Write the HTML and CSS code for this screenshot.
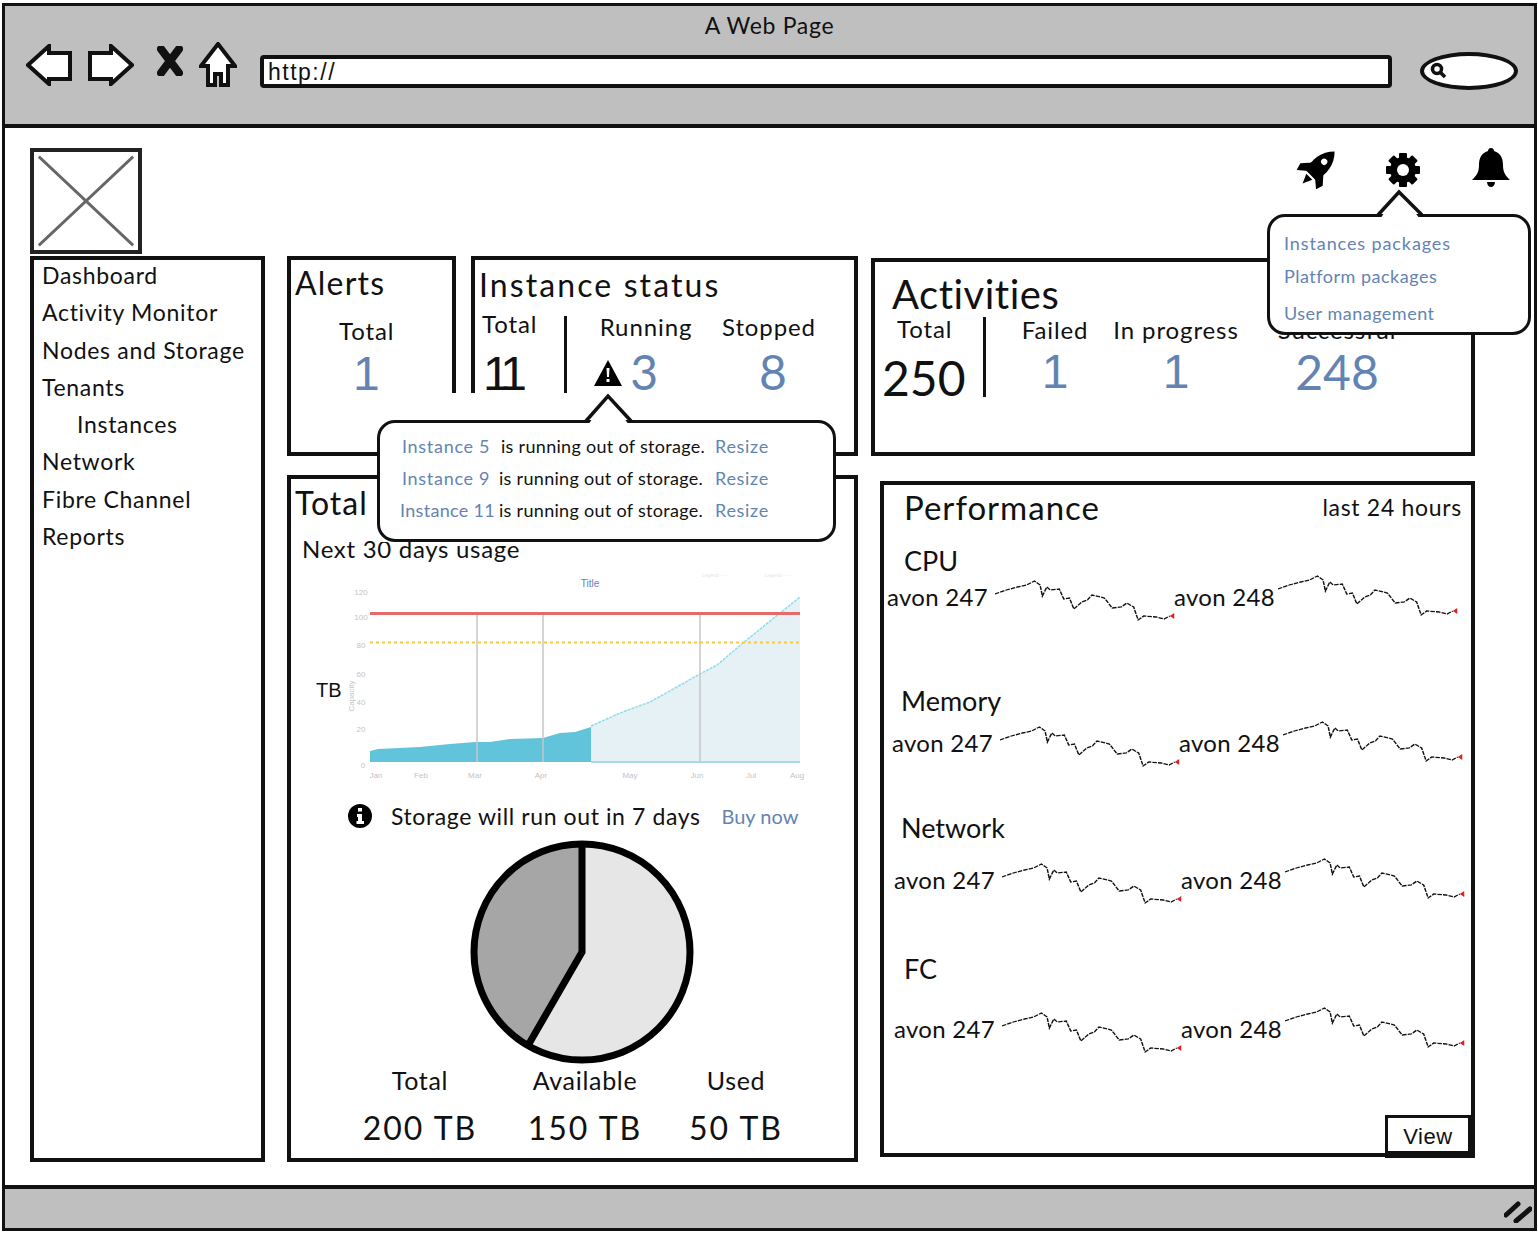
FILE: index.html
```html
<!DOCTYPE html>
<html lang="en">
<head>
    <meta charset="UTF-8">
    <title>A Web Page</title>
    <link rel="stylesheet" href="styles.css">
</head>
<body>
<svg class="defs" width="0" height="0">
    <symbol id="spark" viewBox="0 0 165 48" preserveAspectRatio="none">
        <path class="spark-line" d="M0 14 10 10 20 7 28 5 35 1 40 5 42 16 46 7 49 10 57 9 61 19 66 18 70 29 77 22 82 20 86 15 97 18 104 28 112 27 117 23 123 27 127 40 132 36 143 37 150 39 155 36"/>
        <path class="spark-end" d="M155 36 159 33V39Z"/>
    </symbol>
</svg>
<div class="window">
    <header class="titlebar">
        <div class="title">A Web Page</div>
        <div class="toolbar">
            <svg class="nav-icon nav-arrow" width="46" height="42" viewBox="0 0 46 42"><path d="M2 21 23 2V9H44V35H23V40Z"/></svg>
            <svg class="nav-icon nav-arrow" width="46" height="42" viewBox="0 0 46 42"><path d="M44 21 23 2V9H2V35H23V40Z"/></svg>
            <svg class="nav-stop" width="26" height="30" viewBox="0 0 26 30"><path d="M4 3 22 27M22 3 4 27"/></svg>
            <svg class="nav-icon" width="38" height="46" viewBox="0 0 38 46"><path d="M19 2 36 24H29V43H22V32H16V43H9V24H2Z"/></svg>
            <div class="url">http://</div>
            <div class="search">
                <svg width="18" height="18" viewBox="0 0 18 18"><circle cx="7" cy="7" r="4.5"/><path d="M10 10 15 15"/></svg>
            </div>
        </div>
    </header>

    <main class="content">
        <div class="topbar">
            <svg class="logo" width="112" height="106" viewBox="0 0 112 106"><path d="M5 5 107 101M107 5 5 101"/></svg>
            <div class="top-icons">
                <svg class="icon-rocket" width="40" height="38" viewBox="-19 -18 38 36">
                    <g transform="rotate(45)">
                        <path d="M0-25C9-16 10-5 7 7H-7C-10-5-9-16 0-25Z"/>
                        <path d="M-7-3-15 6-13 13-6 7ZM7-3 15 6 13 13 6 7ZM-4 9H4L0 18Z"/>
                        <circle class="hole" cx="0" cy="-11" r="3"/>
                    </g>
                </svg>
                <svg class="icon-gear" width="36" height="36" viewBox="-18 -18 36 36">
                    <rect x="-4" y="-17" width="8" height="34" rx="1"/>
                    <rect x="-4" y="-17" width="8" height="34" rx="1" transform="rotate(45)"/>
                    <rect x="-4" y="-17" width="8" height="34" rx="1" transform="rotate(90)"/>
                    <rect x="-4" y="-17" width="8" height="34" rx="1" transform="rotate(135)"/>
                    <circle r="13"/>
                    <circle class="hole" r="6"/>
                </svg>
                <svg class="icon-bell" width="38" height="40" viewBox="0 0 38 40">
                    <path d="M19 0C17 0 16 1.500 16 3 9 5 7 11 7 17 7 24 5 27 0 32H38C33 27 31 24 31 17 31 11 29 5 22 3 22 1.500 21 0 19 0Z"/>
                    <path d="M15 34H23C23 37 21 39 19 39 17 39 15 37 15 34Z"/>
                </svg>
            </div>
        </div>

        <div class="layout">
            <nav class="sidebar">
                <a href="#">Dashboard</a>
                <a href="#">Activity Monitor</a>
                <a href="#">Nodes and Storage</a>
                <a href="#">Tenants</a>
                <a href="#" class="sub">Instances</a>
                <a href="#">Network</a>
                <a href="#">Fibre Channel</a>
                <a href="#">Reports</a>
            </nav>

            <div class="panels">
                <section class="panel alerts">
                    <h2>Alerts</h2>
                    <div class="stat-label">Total</div>
                    <div class="stat-value stat-one blue">1</div>
                </section>

                <section class="panel status">
                    <h2>Instance status</h2>
                    <div class="stats">
                        <div class="stat stat-main">
                            <div class="stat-label">Total</div>
                            <div class="stat-value stat-one">11</div>
                        </div>
                        <div class="stat stat-running">
                            <div class="stat-label">Running</div>
                            <div class="stat-value blue">
                                <svg class="warn" width="28" height="26" viewBox="0 0 28 26"><path d="M14 0 28 26H0Z"/><path class="hole" d="M12.500 8H15.500L15 17H13ZM12.500 19H15.500V22H12.500Z"/></svg>
                                3
                            </div>
                        </div>
                        <div class="stat stat-stopped">
                            <div class="stat-label">Stopped</div>
                            <div class="stat-value blue">8</div>
                        </div>
                    </div>
                </section>

                <section class="panel activities">
                    <h2>Activities</h2>
                    <div class="stats">
                        <div class="stat stat-main">
                            <div class="stat-label">Total</div>
                            <div class="stat-value">250</div>
                        </div>
                        <div class="stat stat-failed">
                            <div class="stat-label">Failed</div>
                            <div class="stat-value stat-one blue">1</div>
                        </div>
                        <div class="stat stat-progress">
                            <div class="stat-label">In progress</div>
                            <div class="stat-value stat-one blue">1</div>
                        </div>
                        <div class="stat stat-success">
                            <div class="stat-label">Successful</div>
                            <div class="stat-value blue">248</div>
                        </div>
                    </div>
                </section>

                <section class="panel capacity">
                    <h2>Total</h2>
                    <p class="usage">Next 30 days usage</p>
                    <div class="chart-row">
                        <span class="chart-unit">TB</span>
                        <svg class="chart" width="465" height="220" viewBox="345 570 465 220">
                            <text class="chart-title" x="590" y="587">Title</text>
                            <text class="chart-legend" x="715" y="577">Legend - - -</text>
                            <text class="chart-legend" x="778" y="577">Legend - - -</text>
                            <g class="chart-ticks">
                                <text x="361" y="595">120</text>
                                <text x="361" y="620">100</text>
                                <text x="361" y="648">80</text>
                                <text x="361" y="677">60</text>
                                <text x="361" y="705">40</text>
                                <text x="361" y="732">20</text>
                                <text x="363" y="768">0</text>
                                <text x="376" y="778">Jan</text>
                                <text x="421" y="778">Feb</text>
                                <text x="475" y="778">Mar</text>
                                <text x="541" y="778">Apr</text>
                                <text x="630" y="778">May</text>
                                <text x="697" y="778">Jun</text>
                                <text x="751" y="778">Jul</text>
                                <text x="797" y="778">Aug</text>
                                <text transform="translate(354 696) rotate(-90)">Capacity</text>
                            </g>
                            <path class="area-future" d="M591 726 620 713 650 702 700 674 717 665 743 643 780 613 800 597V762H591Z"/>
                            <path class="area-past" d="M370 751 378 749 420 747 450 744 475 742 490 742 510 739 543 738 560 733 575 732 591 727V762H370Z"/>
                            <path class="trend" d="M591 726 620 713 650 702 700 674 717 665 743 643 780 613 800 597"/>
                            <path class="baseline" d="M591 762H800"/>
                            <path class="gridline" d="M477 614V762M543 614V762M700 614V762"/>
                            <path class="limit" d="M370 613.500H800"/>
                            <path class="warn-line" d="M370 642.500H800"/>
                        </svg>
                    </div>
                    <div class="notice">
                        <svg width="24" height="24" viewBox="0 0 24 24"><circle cx="12" cy="12" r="12"/><path class="hole" d="M10 4H14V7.500H10ZM9 10H14V17H16V20H8.500V17H10V13H9Z"/></svg>
                        <span>Storage will run out in 7 days</span>
                        <a href="#" class="link">Buy now</a>
                    </div>
                    <svg class="pie" width="226" height="226" viewBox="0 0 226 226">
                        <circle class="pie-used" cx="113" cy="113" r="108"/>
                        <path class="pie-free" d="M113 5A108 108 0 1 1 59 206.500L113 113Z"/>
                        <path class="pie-edge" d="M113 5V113L59 206.500"/>
                        <circle class="pie-edge" cx="113" cy="113" r="108"/>
                    </svg>
                    <div class="legend">
                        <div><span>Total</span><strong>200 TB</strong></div>
                        <div><span>Available</span><strong>150 TB</strong></div>
                        <div><span>Used</span><strong>50 TB</strong></div>
                    </div>
                </section>

                <section class="panel performance">
                    <div class="perf-head">
                        <h2>Performance</h2>
                        <span>last 24 hours</span>
                    </div>
                    <div class="metric metric-cpu">
                        <h3>CPU</h3>
                        <div class="sparks">
                            <span>avon 247</span><svg class="spark"><use href="#spark" width="186" height="48"/></svg>
                            <span>avon 248</span><svg class="spark"><use href="#spark" width="186" height="48"/></svg>
                        </div>
                    </div>
                    <div class="metric metric-memory">
                        <h3>Memory</h3>
                        <div class="sparks">
                            <span>avon 247</span><svg class="spark"><use href="#spark" width="186" height="48"/></svg>
                            <span>avon 248</span><svg class="spark"><use href="#spark" width="186" height="48"/></svg>
                        </div>
                    </div>
                    <div class="metric metric-network">
                        <h3>Network</h3>
                        <div class="sparks">
                            <span>avon 247</span><svg class="spark"><use href="#spark" width="186" height="48"/></svg>
                            <span>avon 248</span><svg class="spark"><use href="#spark" width="186" height="48"/></svg>
                        </div>
                    </div>
                    <div class="metric metric-fc">
                        <h3>FC</h3>
                        <div class="sparks">
                            <span>avon 247</span><svg class="spark"><use href="#spark" width="186" height="48"/></svg>
                            <span>avon 248</span><svg class="spark"><use href="#spark" width="186" height="48"/></svg>
                        </div>
                    </div>
                    <button class="view-btn">View</button>
                </section>
            </div>
        </div>

        <!-- callouts sit on top of the panels -->
        <div class="callout callout-alerts">
            <div class="bubble">
                <p><a href="#" class="link">Instance 5</a><span>is running out of storage.</span><a href="#" class="link">Resize</a></p>
                <p><a href="#" class="link">Instance 9</a><span>is running out of storage.</span><a href="#" class="link">Resize</a></p>
                <p><a href="#" class="link">Instance 11</a><span>is running out of storage.</span><a href="#" class="link">Resize</a></p>
            </div>
            <svg class="tail" width="50" height="34" viewBox="0 0 50 34"><path class="tail-fill" d="M4 32 24 3 45 32Z"/><path d="M2 28 24 3 47 28"/></svg>
        </div>

        <div class="callout callout-settings">
            <div class="bubble">
                <a href="#" class="link">Instances packages</a>
                <a href="#" class="link">Platform packages</a>
                <a href="#" class="link">User management</a>
            </div>
            <svg class="tail" width="50" height="32" viewBox="0 0 50 32"><path class="tail-fill" d="M4 30 23 3 44 30Z"/><path d="M2 26 23 3 46 26"/></svg>
        </div>
    </main>

    <footer class="statusbar">
        <svg width="28" height="22" viewBox="0 0 28 22"><path d="M2 14 14 3M12 20 26 8"/></svg>
    </footer>
</div>
</body>
</html>
```

FILE: styles.css
```css
* {
    margin: 0;
    padding: 0;
    box-sizing: border-box;
}

body {
    background: #fff;
    color: #111;
    font-family: 'Lato', 'Liberation Sans', sans-serif;
    font-size: 23px;
    letter-spacing: 0.7px;
}

a {
    color: inherit;
    text-decoration: none;
}

.defs {
    position: absolute;
}

/* Browser window */
.window {
    width: 1535px;
    height: 1228px;
    margin: 3px 0 0 2px;
    border: 3px solid #111;
    display: flex;
    flex-direction: column;
}

.titlebar {
    height: 122px;
    background: #bfbfbf;
    border-bottom: 4px solid #111;
    flex-shrink: 0;
}

.title {
    text-align: center;
    font-size: 23px;
    line-height: 28px;
    padding-top: 5px;
    height: 31px;
}

.toolbar {
    display: flex;
    align-items: flex-start;
    padding: 5px 16px 0 21px;
}

.nav-icon {
    fill: #fff;
    stroke: #111;
    stroke-width: 4;
    margin-right: 16px;
    flex-shrink: 0;
}

.nav-arrow {
    margin-top: 2px;
}

.nav-stop {
    fill: none;
    stroke: #111;
    stroke-width: 8;
    stroke-linecap: round;
    margin: 4px 16px 0 7px;
    flex-shrink: 0;
}

.url {
    flex: 1;
    height: 33px;
    margin: 13px 28px 0 7px;
    background: #fff;
    border: 4px solid #111;
    border-radius: 4px;
    padding-left: 4px;
    font-family: 'Liberation Sans', sans-serif;
    font-size: 23px;
    letter-spacing: 1.500px;
    line-height: 26px;
}

.search {
    width: 98px;
    height: 38px;
    margin-top: 10px;
    background: #fff;
    border: 4px solid #111;
    border-radius: 50%;
    display: flex;
    align-items: center;
    padding-left: 6px;
}

.search svg {
    fill: none;
    stroke: #111;
    stroke-width: 3.500;
}

.statusbar {
    height: 43px;
    background: #bfbfbf;
    border-top: 4px solid #111;
    display: flex;
    justify-content: flex-end;
    align-items: center;
    padding: 6px 2px 0 0;
    flex-shrink: 0;
}

.statusbar svg {
    fill: none;
    stroke: #111;
    stroke-width: 5;
    stroke-linecap: round;
}

/* Page content */
.content {
    flex: 1;
    position: relative;
    padding: 20px 0 0 25px;
}

.topbar {
    display: flex;
    justify-content: space-between;
    height: 108px;
}

.logo {
    border: 4px solid #222;
    fill: none;
    stroke: #666;
    stroke-width: 3;
    overflow: hidden;
}

.top-icons {
    display: flex;
    align-items: flex-start;
    gap: 49px;
    margin: 0 24px 0 0;
    fill: #000;
}

.icon-rocket {
    margin-top: 3px;
}

.icon-gear {
    margin-top: 4px;
}

.icon-bell {
    margin-left: 2px;
}

.hole {
    fill: #fff;
}

.layout {
    display: flex;
    gap: 22px;
}

.sidebar {
    width: 235px;
    height: 906px;
    border: 4px solid #111;
    padding: 0 0 0 8px;
    display: flex;
    flex-direction: column;
}

.sidebar a {
    line-height: 37.300px;
}

.sidebar a:first-child {
    margin-top: -3px;
}

.sidebar .sub {
    padding-left: 35px;
}

.panels {
    display: grid;
    grid-template-columns: 169px 387px 602px;
    grid-template-rows: 200px 687px;
    column-gap: 15px;
    row-gap: 19px;
}

.panel {
    border: 4px solid #111;
    background: #fff;
}

.panel h2 {
    font-weight: 400;
    font-size: 32px;
    line-height: 40px;
}

.blue,
.link {
    color: #6384b3;
}

.stat-label {
    font-size: 24px;
    line-height: 30px;
    letter-spacing: 0.900px;
    white-space: nowrap;
}

.stat-value {
    font-size: 48px;
    line-height: 54px;
    letter-spacing: 0;
}

/* the drawn 1 has no foot, so it takes the plainer face */
.stat-one {
    font-family: 'Liberation Sans', sans-serif;
}

/* Alerts */
.alerts {
    padding: 3px 0 0 4px;
}

.alerts h2 {
    letter-spacing: 1.200px;
}

.alerts .stat-label {
    padding-left: 44px;
    margin-top: 13px;
}

.alerts .stat-value {
    padding-left: 58px;
    margin-top: 1px;
}

/* Instance status */
.stats {
    display: flex;
}

.stat {
    text-align: center;
}

.status {
    padding-top: 5px;
}

.status h2 {
    padding-left: 4px;
    letter-spacing: 2.100px;
}

.stat-main {
    text-align: left;
    border-right: 3px solid #111;
}

.status .stat-main {
    width: 92px;
    height: 78px;
    margin-top: 11px;
    padding-left: 7px;
}

.status .stat-main .stat-label {
    margin-top: -7px;
}

.status .stat-main .stat-value {
    margin: 8px 0 0 1px;
    letter-spacing: -6px;
}

.status .stat-running {
    width: 150px;
    padding-left: 8px;
    margin-top: 7px;
}

.stat-running .stat-value {
    padding-right: 40px;
    margin-top: 3px;
}

.status .stat-stopped {
    width: 104px;
    margin-top: 7px;
}

.stat-stopped .stat-value {
    margin-top: 3px;
    padding-left: 8px;
}

.warn {
    fill: #000;
    margin-right: -4px;
    vertical-align: 4px;
}

/* Activities */
.activities {
    margin: 2px 0 0 -2px;
    padding-top: 12px;
}

.activities h2 {
    padding-left: 17px;
    font-size: 40px;
    letter-spacing: 0.500px;
}

.activities .stat-main {
    width: 111px;
    height: 80px;
    margin-top: 3px;
    padding-left: 22px;
}

.activities .stat-main .stat-label {
    margin-top: -3px;
}

.activities .stat-main .stat-value {
    margin: 7px 0 0 -15px;
    letter-spacing: 0;
}

.activities .stat-failed .stat-value,
.activities .stat-progress .stat-value,
.activities .stat-success .stat-value {
    margin-top: 0;
}

.stat-failed {
    width: 110px;
    padding: 1px 0 0 28px;
}

.stat-progress {
    width: 160px;
    padding-top: 1px;
}

.stat-success {
    width: 162px;
    padding-top: 1px;
}

/* Capacity */
.capacity {
    grid-column: 1 / 3;
    padding: 4px 0 0 4px;
    display: flex;
    flex-direction: column;
}

.capacity h2 {
    letter-spacing: 1px;
}

.usage {
    font-size: 24px;
    line-height: 30px;
    margin: 11px 0 0 7px;
}

.chart-row {
    display: flex;
    align-items: center;
    height: 220px;
    margin-top: 6px;
}

.chart-unit {
    width: 50px;
    padding-left: 21px;
    font-family: 'Liberation Sans', sans-serif;
    font-size: 20px;
    letter-spacing: 0;
    margin-top: 21px;
}

.chart text {
    font-family: 'Liberation Sans', sans-serif;
    font-size: 8px;
    letter-spacing: 0;
    fill: #c4c4c4;
    text-anchor: middle;
}

.chart .chart-title {
    fill: #6384b3;
    font-size: 10px;
}

.chart .chart-legend {
    fill: #e6e6e6;
    font-size: 5px;
}

.area-future {
    fill: #e5f1f4;
}

.area-past {
    fill: #62c4da;
}

.trend {
    fill: none;
    stroke: #8fdcea;
    stroke-width: 1.500;
    stroke-dasharray: 3 1;
}

.baseline {
    stroke: #a9dbe6;
    stroke-width: 2;
}

.gridline {
    stroke: #c6c6c6;
    stroke-width: 1.500;
}

.limit {
    stroke: #e56b6b;
    stroke-width: 3;
}

.warn-line {
    stroke: #f6c945;
    stroke-width: 2;
    stroke-dasharray: 3 3;
}

.chart {
    fill: none;
    flex-shrink: 0;
}

.notice {
    display: flex;
    align-items: center;
    margin: 12px 0 0 53px;
    font-size: 23px;
}

.notice svg {
    fill: #000;
    margin-right: 19px;
    flex-shrink: 0;
}

.notice span {
    letter-spacing: 0.600px;
}

.notice .link {
    font-size: 20px;
    letter-spacing: 0;
    margin-left: 21px;
}

.pie {
    align-self: flex-start;
    margin: 9px 0 0 174px;
    flex-shrink: 0;
}

.pie-used {
    fill: #a6a6a6;
}

.pie-free {
    fill: #e6e6e6;
}

.pie-edge {
    fill: none;
    stroke: #000;
    stroke-width: 7;
}

.legend {
    display: grid;
    grid-template-columns: 160px 170px 132px;
    margin: 0 0 0 45px;
    text-align: center;
}

.legend span {
    display: block;
    font-size: 25px;
    line-height: 30px;
}

.legend strong {
    display: block;
    font-weight: 400;
    font-size: 32px;
    letter-spacing: 2px;
    line-height: 40px;
    margin-top: 13px;
}

/* Performance */
.performance {
    margin: 6px 0 5px 7px;
    display: flex;
    flex-direction: column;
    padding-top: 2px;
}

.perf-head {
    display: flex;
    justify-content: space-between;
    align-items: center;
    padding: 0 9px 0 20px;
}

.perf-head h2 {
    font-size: 33px;
    letter-spacing: 1px;
}

.metric h3 {
    font-weight: 400;
    font-size: 27px;
    letter-spacing: 0;
    line-height: 34px;
}

.sparks {
    display: flex;
    align-items: center;
    font-size: 24px;
    letter-spacing: 0.300px;
}

.sparks span {
    width: 108px;
    flex-shrink: 0;
}

.spark {
    width: 186px;
    height: 48px;
    flex-shrink: 0;
    margin: 15px -7px 0 0;
}

.sparks .spark:last-child {
    margin: 5px -7px 0 -4px;
}

.spark-line {
    fill: none;
    stroke: #111;
    stroke-width: 1.300;
    stroke-dasharray: 4 1;
}

.spark-end {
    fill: #e02020;
}

.metric-cpu {
    margin-top: 17px;
    padding-left: 3px;
}

.metric-cpu h3 {
    padding-left: 17px;
}

.metric-cpu .sparks {
    margin-top: -13px;
}

.metric-memory {
    margin-top: 56px;
    padding-left: 8px;
}

.metric-memory h3 {
    padding-left: 9px;
}

.metric-memory .sparks {
    margin-top: -7px;
}

.metric-network {
    margin-top: 37px;
    padding-left: 10px;
}

.metric-network h3 {
    padding-left: 7px;
}

.metric-network .sparks {
    margin-top: 3px;
}

.metric-fc {
    margin-top: 41px;
    padding-left: 10px;
}

.metric-fc h3 {
    padding-left: 10px;
}

.metric-fc .sparks {
    margin-top: 11px;
}

.view-btn {
    margin: auto -4px -5px 0;
    align-self: flex-end;
    width: 90px;
    height: 43px;
    background: #fff;
    border: solid #111;
    border-width: 3px 7px 7px 3px;
    padding-top: 4px;
    font-family: 'Liberation Sans', sans-serif;
    font-size: 22px;
    letter-spacing: 0.500px;
    color: #111;
}

/* Callouts */
.callout {
    position: absolute;
    background: #fff;
}

.tail {
    position: absolute;
    fill: none;
    stroke: #111;
    stroke-width: 3.500;
}

.tail .tail-fill {
    fill: #fff;
    stroke: none;
}

.bubble {
    position: absolute;
    background: #fff;
    border: 3.500px solid #111;
    border-radius: 18px;
}

.callout-alerts {
    left: 372px;
    top: 265px;
    width: 459px;
    height: 149px;
}

.callout-alerts .tail {
    left: 207px;
    top: 0;
}

.callout-alerts .bubble {
    left: 0;
    top: 27px;
    width: 459px;
    height: 122px;
    padding-top: 7px;
    font-size: 18px;
    letter-spacing: 0.300px;
}

.callout-alerts .link {
    letter-spacing: 0.700px;
}

.callout-alerts p {
    display: flex;
    line-height: 32px;
}

.callout-alerts p a:first-child {
    width: 119px;
    padding-left: 22px;
    flex-shrink: 0;
    white-space: nowrap;
}

.callout-alerts p:last-child a:first-child {
    padding-left: 20px;
    letter-spacing: 0.300px;
}

.callout-alerts p span {
    width: 216px;
    flex-shrink: 0;
}

.callout-alerts p:first-child span {
    padding-left: 2px;
}

.callout-settings {
    left: 1262px;
    top: 61px;
    width: 264px;
    height: 146px;
}

.callout-settings .tail {
    left: 109px;
    top: 0;
}

.callout-settings .bubble {
    left: 0;
    top: 25px;
    width: 264px;
    height: 121px;
    padding: 15px 0 0 14px;
    display: flex;
    flex-direction: column;
    gap: 11px;
    font-size: 18px;
    letter-spacing: 0.500px;
    line-height: 22px;
}

.callout-settings .link:first-child {
    letter-spacing: 0.900px;
}

.callout-settings .link:last-child {
    margin-top: 4px;
}
```
